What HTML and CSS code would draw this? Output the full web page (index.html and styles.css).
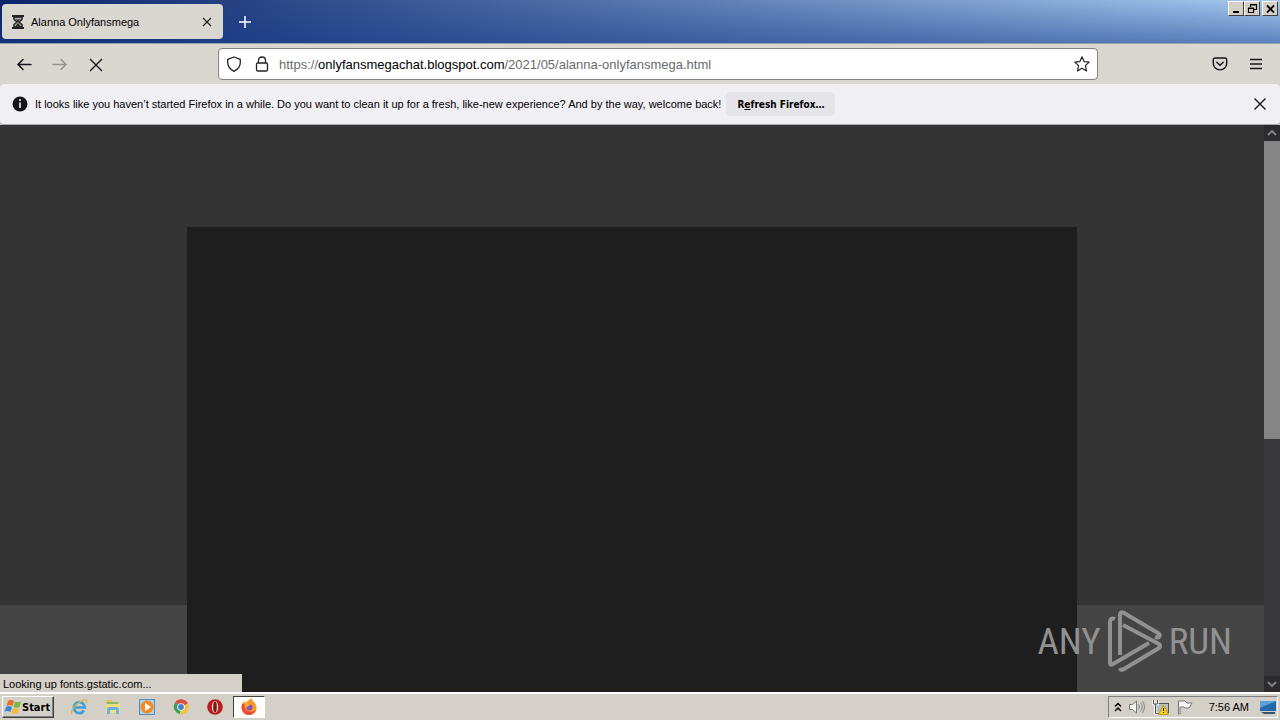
FILE: index.html
```html
<!DOCTYPE html>
<html lang="en">
<head>
<meta charset="utf-8">
<title>Alanna Onlyfansmega</title>
<link rel="stylesheet" href="styles.css">
</head>
<body>
<div class="desktop">
  <header class="titlebar">
    <div class="tab">
      <svg class="tab-icon" width="14" height="14" viewBox="0 0 14 14"><path d="M1 1h12M1 13h12" stroke="#222" stroke-width="2"/><path d="M3 2v2.500L6 7 3 9.500V12h8V9.500L8 7l3-2.500V2z" fill="#aaa" stroke="#222" stroke-width="1.500"/><path d="M5 4.500h4L7 7zM7 8l2.500 3.500h-5z" fill="#222"/></svg>
      <span class="tab-title">Alanna Onlyfansmega</span>
      <button class="icon-button" aria-label="Close tab"><svg width="10" height="10" viewBox="0 0 10 10"><path d="M1 1l8 8M9 1L1 9" stroke="#222" stroke-width="1.200"/></svg></button>
    </div>
    <button class="icon-button new-tab" aria-label="New tab"><svg width="12" height="12" viewBox="0 0 12 12"><path d="M6 0v12M0 6h12" stroke="#fff" stroke-width="1.500"/></svg></button>
    <div class="window-controls">
      <button class="window-button" aria-label="Minimize"><svg width="14" height="12" viewBox="0 0 14 12"><path d="M4 9h6" stroke="#000" stroke-width="2"/></svg></button>
      <button class="window-button" aria-label="Restore"><svg width="14" height="12" viewBox="0 0 14 12"><path d="M5.500 4V1.500h6v5H9M5 2h7M3.500 5.500h5v4h-5zM3 5h6" fill="none" stroke="#000" stroke-width="1.200"/></svg></button>
      <button class="window-button close-window" aria-label="Close"><svg width="14" height="12" viewBox="0 0 14 12"><path d="M4 2.500l7 7M11 2.500l-7 7" stroke="#000" stroke-width="1.800"/></svg></button>
    </div>
  </header>
  <nav class="toolbar">
    <div class="nav-buttons">
      <button class="icon-button" aria-label="Back"><svg width="16" height="16" viewBox="0 0 16 16"><path d="M15 8.500H2M7 3.500l-5 5 5 5" fill="none" stroke="#15141a" stroke-width="1.500" stroke-linecap="round"/></svg></button>
      <button class="icon-button" aria-label="Forward" disabled><svg width="16" height="16" viewBox="0 0 16 16"><path d="M1 8.500h13M9 3.500l5 5-5 5" fill="none" stroke="#959390" stroke-width="1.500" stroke-linecap="round"/></svg></button>
      <button class="icon-button" aria-label="Stop"><svg width="16" height="16" viewBox="0 0 16 16"><path d="M2 3l12 12M14 3L2 15" stroke="#15141a" stroke-width="1.400"/></svg></button>
    </div>
    <div class="address">
      <svg width="16" height="16" viewBox="0 0 16 16"><path d="M8 1l6.300 2.400v3.100c0 4-2 6.700-6.300 8.800C3.700 13.200 1.700 10.500 1.700 6.500V3.400z" fill="none" stroke="#222" stroke-width="1.300" stroke-linejoin="round"/></svg>
      <svg width="16" height="16" viewBox="0 0 16 16"><rect x="2.500" y="7" width="11" height="8" rx="1.300" fill="none" stroke="#222" stroke-width="1.300"/><path d="M4.500 7V4.300C4.500 2 6 1 8 1s3.500 1 3.500 3.300V7" fill="none" stroke="#222" stroke-width="1.300"/></svg>
      <div class="url" role="textbox" contenteditable="true" spellcheck="false" aria-label="Address">https://<b>onlyfansmegachat.blogspot.com</b>/2021/05/alanna-onlyfansmega.html</div>
      <button class="icon-button" aria-label="Bookmark"><svg width="16" height="16" viewBox="0 0 16 16"><path d="M8 .8l2.100 4.800 5.100.5-3.800 3.500 1.100 5.300L8 12.200l-4.500 2.700 1.100-5.300L.8 6.100l5.100-.5z" fill="none" stroke="#222" stroke-width="1.200" stroke-linejoin="round"/></svg></button>
    </div>
    <div class="toolbar-end">
      <button class="icon-button" aria-label="Pocket"><svg width="16" height="16" viewBox="0 0 16 16"><path d="M3 2h10q1.700 0 1.700 1.700V7.500a6.700 6.400 0 0 1-13.400 0V3.700Q1.300 2 3 2zM4.800 6.200L8 9.200l3.200-3" fill="none" stroke="#15141a" stroke-width="1.400" stroke-linecap="round"/></svg></button>
      <button class="icon-button" aria-label="Menu"><svg width="16" height="16" viewBox="0 0 16 16"><path d="M2 3.500h12M2 8h12M2 12.500h12" stroke="#15141a" stroke-width="1.400"/></svg></button>
    </div>
  </nav>
  <div class="notice" role="status">
    <svg width="16" height="16" viewBox="0 0 16 16"><circle cx="8" cy="8" r="7.500" fill="#15141a"/><path d="M8 3v2M8 6.500V12" stroke="#fff" stroke-width="1.500"/></svg>
    <span class="notice-text">It looks like you haven’t started Firefox in a while. Do you want to clean it up for a fresh, like-new experience? And by the way, welcome back!</span>
    <button class="refresh">R<u>e</u>fresh Firefox…</button>
    <button class="icon-button notice-close" aria-label="Dismiss"><svg width="14" height="14" viewBox="0 0 14 14"><path d="M1.500 1.500l11 11M12.500 1.500l-11 11" stroke="#15141a" stroke-width="1.400"/></svg></button>
  </div>
  <main class="viewport">
    <div class="page">
      <div class="footer-band"></div>
      <div class="post"></div>
    </div>
    <div class="scrollbar">
      <div class="scroll-arrow"><svg width="10" height="6" viewBox="0 0 10 6"><path d="M1 5l4-4 4 4" fill="none" stroke="#858585" stroke-width="1.800"/></svg></div>
      <div class="scroll-track"><div class="scroll-thumb"></div></div>
      <div class="scroll-arrow"><svg width="10" height="6" viewBox="0 0 10 6"><path d="M1 1l4 4 4-4" fill="none" stroke="#858585" stroke-width="1.800"/></svg></div>
    </div>
    <div class="link-status">Looking up fonts.gstatic.com...</div>
    <div class="watermark">
      <span>ANY</span>
      <svg width="54" height="62" viewBox="0 0 54 62" fill="none" stroke="#919191" stroke-width="4" stroke-linejoin="round"><path d="M7 9Q2 7 2 12v41q0 3 3 1l36-21"/><path d="M12 45V5q0-4 4-2l34 20q3 2 1 4-1 1-4 0"/><path d="M15 15l36 19q2 2 0 4L16 59q-3 2-4-1"/></svg>
      <span>RUN</span>
    </div>
  </main>
  <footer class="taskbar">
    <button class="start"><svg width="18" height="16" viewBox="0 0 18 16"><path d="M4 2q3-2 6 0L8.500 7q-3-2-6 0z" fill="#e66b2c"/><path d="M11 2.500q3 1.500 6 0L15.500 8q-3 1.500-6 0z" fill="#78b83c"/><path d="M2 8q3-2 6 0l-1.500 5q-3-2-6 0z" fill="#3688ce"/><path d="M9 9q3 1.500 6 0l-1.500 5q-3 1.500-6 0z" fill="#f2bb32"/></svg>Start</button>
    <div class="apps">
      <button class="app" aria-label="Internet Explorer"><svg width="18" height="18" viewBox="0 0 18 18"><path d="M14 12.500a5.500 5.500 0 1 1 .8-3H5" fill="none" stroke="#3e9fda" stroke-width="2.700"/><path d="M2 16C-.5 13 7 4 14.500 2q3-.5 2 3" fill="none" stroke="#d8b64c" stroke-width="1.300"/></svg></button>
      <button class="app" aria-label="Explorer"><svg width="18" height="18" viewBox="0 0 18 18"><path d="M2 2h6l1 2h6v10H2z" fill="#e2c261"/><path d="M3 4h11v5H3z" fill="#84bd65"/><path d="M2 6h14v9H2z" fill="#f4dc83"/><path d="M3 16v-5q0-2 2-2h8q2 0 2 2v5h-3v-4H6v4z" fill="#69b4df"/></svg></button>
      <button class="app" aria-label="Media Player"><svg width="18" height="18" viewBox="0 0 18 18"><rect x="1.500" y="1.500" width="15" height="15" fill="#a9d4ed" stroke="#538fbc"/><circle cx="9" cy="9" r="6.500" fill="#f38b20"/><path d="M7 5l6 4-6 4z" fill="#fff"/></svg></button>
      <button class="app" aria-label="Chrome"><svg width="18" height="18" viewBox="0 0 18 18"><path d="M9 9L3 4.500a7.500 7.500 0 0 1 13 1z" fill="#df4b3e"/><path d="M9 9L3 4.500A7.500 7.500 0 0 0 8 16z" fill="#36a15a"/><path d="M9 9l7-3.500A7.500 7.500 0 0 1 8 16.400z" fill="#f2c43d"/><circle cx="9" cy="9" r="3.800" fill="#fff"/><circle cx="9" cy="9" r="2.900" fill="#477fd4"/></svg></button>
      <button class="app" aria-label="Opera"><svg width="18" height="18" viewBox="0 0 18 18"><circle cx="9" cy="9" r="7.800" fill="#b71e1b"/><ellipse cx="9" cy="9" rx="3.200" ry="6" fill="#ddd"/><ellipse cx="9" cy="9" rx="1.800" ry="5.500" fill="#811"/></svg></button>
      <button class="app active" aria-label="Firefox"><svg width="18" height="18" viewBox="0 0 18 18"><path d="M9 2q2-2 3-1 0 2 2 3 3 3 2.500 7-1.500 6-7.500 6T1.500 11Q1 6 4 3l1 2z" fill="#f99a26"/><path d="M2 6q-2 9 6 11 6 0 8-5-4 3-8 1-5-2-3-7z" fill="#ee4a3c"/><circle cx="9.500" cy="9.500" r="3" fill="#8056bd"/><path d="M4 6q4-2 6 1l-3 2q-2-1-3-3z" fill="#fbb02f"/></svg></button>
    </div>
    <div class="tray">
      <svg width="8" height="10" viewBox="0 0 8 10"><path d="M1 4.500l3-3 3 3M1 9l3-3 3 3" fill="none" stroke="#000" stroke-width="1.500"/></svg>
      <svg class="speaker" width="18" height="16" viewBox="0 0 18 16"><path d="M1.500 5.500h3L8.500 2v12l-4-3.500h-3z" fill="#f7f7f7" stroke="#777"/><path d="M10.500 5.500q2 2.500 0 5M12.500 3.500q3.500 4.500 0 9M14.500 2q4 6 0 12" fill="none" stroke="#888"/></svg>
      <svg class="network" width="18" height="16" viewBox="0 0 18 16"><rect x="4.500" y="4.500" width="12" height="9" fill="#b8c0c5" stroke="#555"/><path d="M1.500 1v4h4V1M3.500 5v9.500H7" fill="none" stroke="#fff" stroke-width="2.500"/><path d="M1.500 1v4h4V1M3.500 5v9.500H7" fill="none" stroke="#555"/><path d="M11.500 6l5 9.500h-10z" fill="#f8cf27" stroke="#c99a11"/><path d="M11.500 9v3m0 1v1" stroke="#222"/></svg>
      <svg class="flag" width="18" height="16" viewBox="0 0 18 16"><path d="M2.500 15V2H9l2 2h5l-3 5H9L8 8H4v7z" fill="#f7f7f7" stroke="#777"/></svg>
      <time class="clock">7:56 AM</time>
      <svg width="18" height="16" viewBox="0 0 18 16"><path d="M1 2h16v10H1z" fill="#2369ae"/><path d="M1 2h16L1 9z" fill="#5ca1d6"/><path d="M2 13h14v2H5z" fill="#38536d"/></svg>
    </div>
  </footer>
</div>
</body>
</html>
```
FILE: styles.css
```css
* { box-sizing: border-box; }
body { margin: 0; }
button { margin: 0; padding: 0; border: 0; font: inherit; color: inherit; }
svg { display: block; flex: none; }
.desktop {
  display: flex;
  flex-direction: column;
  height: 100vh;
  overflow: hidden;
  font-family: "Liberation Sans", Arial, sans-serif;
  font-size: 11px;
  color: #000;
  background: #d4d0c8;
}
.icon-button { display: flex; align-items: center; justify-content: center; background: none; }
.titlebar {
  display: flex;
  flex: none;
  height: 44px;
  padding: 4px 2px;
  background:
    linear-gradient(180deg, rgba(20, 60, 140, 0), rgba(20, 60, 140, 0.5)),
    linear-gradient(90deg, #0a246a, #a6caf0);
  border-bottom: 1px solid #9aa0ac;
}
.tab {
  display: flex;
  align-items: center;
  width: 221px;
  gap: 6px;
  padding: 1px 11px 0 9px;
  border-radius: 4px;
  background: #dad6d0;
}
.tab-title { flex: 1; }
.new-tab { width: 44px; padding-top: 1px; }
.window-controls { display: flex; align-items: flex-start; margin: -3px 0 0 auto; }
.window-button {
  width: 16px;
  height: 15px;
  background: #d4d0c8;
  border: 1px solid;
  border-color: #fff #404040 #404040 #fff;
}
.close-window { margin-left: 2px; }
.toolbar {
  display: flex;
  align-items: center;
  flex: none;
  height: 40px;
  padding: 0 16px;
  background: #dad7d1;
}
.nav-buttons { display: flex; gap: 20px; }
.toolbar-end { display: flex; gap: 20px; margin-left: auto; }
.address {
  display: flex;
  align-items: center;
  flex: 0 1 880px;
  height: 32px;
  margin: 0 16px 0 114px;
  padding: 0 7px;
  gap: 12px;
  background: #fff;
  border: 1px solid #85827d;
  border-radius: 4px;
}
.url { flex: 1; margin-left: -3px; padding-top: 1px; font-size: 13px; color: #6b6b6b; white-space: nowrap; }
.url b { font-weight: 400; color: #000; }
.notice {
  display: flex;
  align-items: center;
  flex: none;
  height: 41px;
  padding: 0 13px 0 12px;
  background: #f0eff4;
  border-radius: 4px;
  border-bottom: 1px solid #aaa;
}
.notice-text { margin-left: 7px; white-space: nowrap; }
.refresh {
  height: 24px;
  margin-left: 5px;
  padding: 0 11px;
  border-radius: 4px;
  background: #e5e4e9;
  font: 700 10px "DejaVu Sans Condensed", "DejaVu Sans", sans-serif;
}
.notice-close { margin-left: auto; }
.viewport { position: relative; display: flex; flex: 1; min-height: 0; }
.page {
  display: grid;
  flex: 1;
  grid-template: 102px 1fr 87px / 1fr 890px 1fr;
  background: #343434;
}
.footer-band { grid-area: 3 / 1 / 4 / 4; background: #444; }
.post { grid-area: 2 / 2 / 4 / 3; background: #1e1e1e; }
.scrollbar { display: flex; flex-direction: column; width: 16px; background: #38383d; }
.scroll-arrow { display: flex; align-items: center; justify-content: center; height: 16px; background: #2b2b2e; }
.scroll-track { flex: 1; }
.scroll-thumb { height: 55.7%; background: #858585; }
.link-status {
  position: absolute;
  left: 0;
  bottom: 0;
  width: 242px;
  height: 18px;
  padding-left: 3px;
  line-height: 20px;
  background: #d4d0c8;
}
.watermark {
  position: absolute;
  right: 48px;
  bottom: 20px;
  display: flex;
  align-items: center;
  gap: 7px;
  font: 37px "Roboto Condensed", Roboto, sans-serif;
  color: #919191;
}
.taskbar {
  display: flex;
  align-items: center;
  flex: none;
  height: 28px;
  padding: 0 2px;
  background: #d4d0c8;
  border-top: 2px solid #fff;
}
.start {
  display: flex;
  align-items: center;
  width: 52px;
  height: 22px;
  padding-left: 1px;
  font: 700 11px "DejaVu Sans Condensed", "DejaVu Sans", sans-serif;
  background: #d4d0c8;
  border: 1px solid;
  border-color: #fff #404040 #404040 #fff;
  box-shadow: inset -1px -1px #808080;
}
.apps { display: flex; gap: 2px; margin-left: 9px; }
.app { display: flex; align-items: center; justify-content: center; width: 32px; height: 22px; background: none; }
.active { background: #fff; border: 1px solid; border-color: #404040 #fff #fff #404040; }
.tray {
  display: flex;
  align-items: center;
  height: 22px;
  margin-left: auto;
  padding: 0 0 0 5px;
  gap: 6px;
  border: 1px solid;
  border-color: #808080 #fff #fff #808080;
}
.clock { margin: 0 4px 0 9px; }
```
